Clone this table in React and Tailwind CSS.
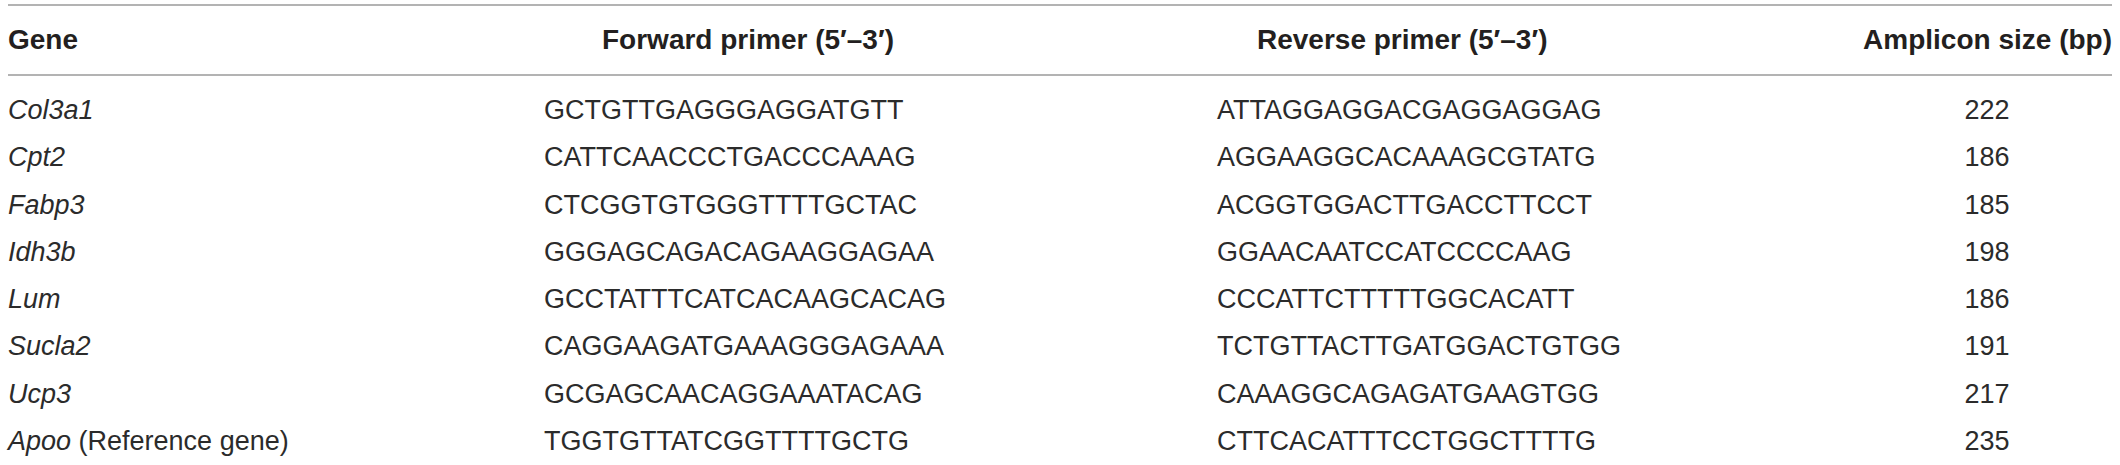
import React from 'react';

const rows = [
  { gene: 'Col3a1', forward: 'GCTGTTGAGGGAGGATGTT', reverse: 'ATTAGGAGGACGAGGAGGAG', size: '222' },
  { gene: 'Cpt2', forward: 'CATTCAACCCTGACCCAAAG', reverse: 'AGGAAGGCACAAAGCGTATG', size: '186' },
  { gene: 'Fabp3', forward: 'CTCGGTGTGGGTTTTGCTAC', reverse: 'ACGGTGGACTTGACCTTCCT', size: '185' },
  { gene: 'Idh3b', forward: 'GGGAGCAGACAGAAGGAGAA', reverse: 'GGAACAATCCATCCCCAAG', size: '198' },
  { gene: 'Lum', forward: 'GCCTATTTCATCACAAGCACAG', reverse: 'CCCATTCTTTTTGGCACATT', size: '186' },
  { gene: 'Sucla2', forward: 'CAGGAAGATGAAAGGGAGAAA', reverse: 'TCTGTTACTTGATGGACTGTGG', size: '191' },
  { gene: 'Ucp3', forward: 'GCGAGCAACAGGAAATACAG', reverse: 'CAAAGGCAGAGATGAAGTGG', size: '217' },
  { gene: 'Apoo', note: ' (Reference gene)', forward: 'TGGTGTTATCGGTTTTGCTG', reverse: 'CTTCACATTTCCTGGCTTTTG', size: '235' },
];

// gene | forward (+gap) | reverse (+gap) | amplicon size
const cols = 'grid grid-cols-[536px_673px_1fr_250px]';

const App = () => {
  return (
    <div className="w-[2120px] h-[465px] overflow-hidden bg-white px-[8px] pt-[4px] text-[#231f20] font-['Liberation_Sans',Arial,sans-serif]">
      {/* Header */}
      <div className={`${cols} items-center h-[72px] border-y-2 border-[#b3b3b3] text-[28px] leading-none font-bold`}>
        <div>Gene</div>
        <div className="w-[408px] text-center">Forward primer (5′–3′)</div>
        <div className="pl-[40px]">Reverse primer (5′–3′)</div>
        <div className="text-right whitespace-nowrap">Amplicon size (bp)</div>
      </div>
      {/* Body */}
      <div className="pt-[11px] text-[27px] leading-[47.3px] text-[#2b2b2b]">
        {rows.map((r) => (
          <div key={r.gene} className={cols}>
            <div>
              <span className="italic">{r.gene}</span>
              {r.note}
            </div>
            <div>{r.forward}</div>
            <div>{r.reverse}</div>
            <div className="text-center">{r.size}</div>
          </div>
        ))}
      </div>
    </div>
  );
};

export default App;
